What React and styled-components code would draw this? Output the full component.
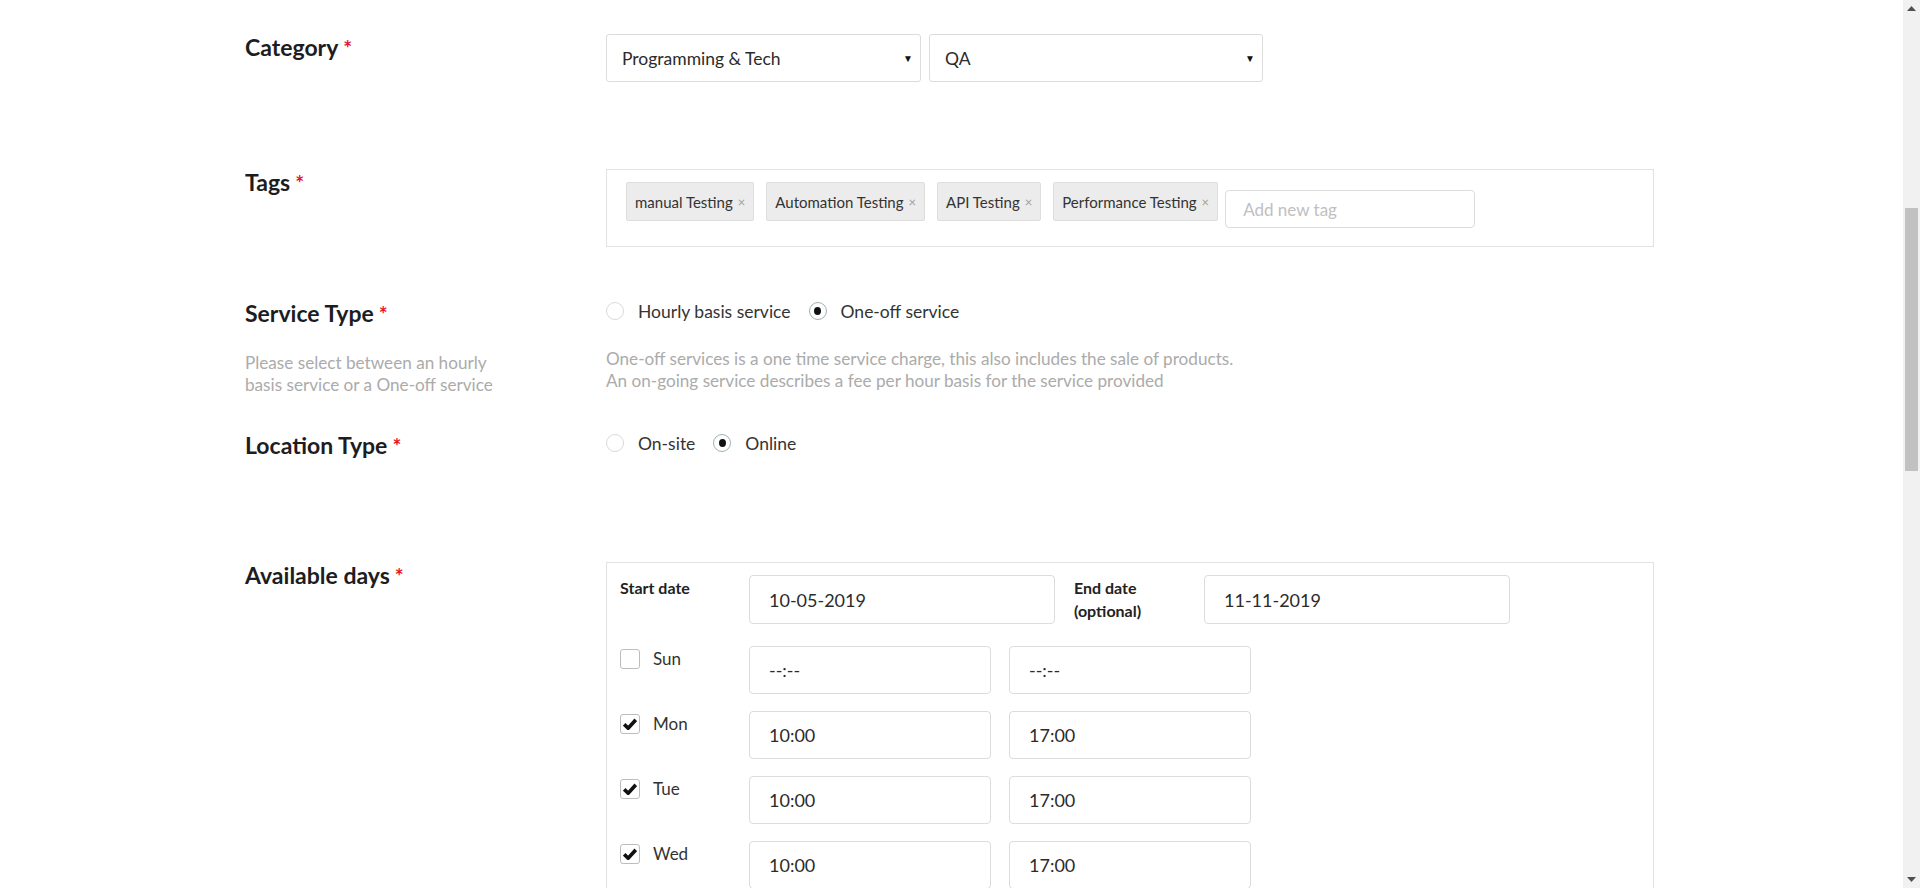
import React from 'react';
import styled, { createGlobalStyle } from 'styled-components';

const GlobalStyle = createGlobalStyle`
  html, body { margin: 0; padding: 0; background: #fff; overflow: hidden; }
  body { font-family: Lato, "Open Sans", Arial, sans-serif; color: #333; }
  * { box-sizing: border-box; }
`;

const Page = styled.div`
  display: flex;
  width: 1920px;
  height: 888px;
  overflow: hidden;
`;

const Main = styled.main`
  flex: 1;
  padding: 34px 0 0 245px;
  overflow: hidden;
`;

const Form = styled.div`
  width: 1409px;
  display: flex;
  flex-direction: column;
`;

const Row = styled.div`
  display: grid;
  grid-template-columns: 361px 1048px;
  align-items: start;
  margin-top: ${(p) => p.$mt || 0}px;
`;

const LabelCol = styled.div`
  display: flex;
  flex-direction: column;
`;

const Label = styled.div`
  font-size: 23px;
  font-weight: 700;
  color: #1d1d1f;
  line-height: 26px;
`;

const Req = styled.span`
  color: #e5132c;
  margin-left: 5px;
  font-size: 21px;
`;

const Help = styled.div`
  font-size: 17.15px;
  line-height: 22px;
  color: #ababab;
  margin-top: ${(p) => p.$mt || 0}px;
`;

const Field = styled.div`
  display: flex;
  flex-direction: column;
`;

const SelectRow = styled.div`
  display: flex;
  gap: 8px;
`;

const Select = styled.div`
  width: ${(p) => p.$w}px;
  height: 48px;
  border: 1px solid #dcdcdc;
  border-radius: 3px;
  padding: 0 7px 0 15px;
  display: flex;
  align-items: center;
  justify-content: space-between;
  font-size: 17.5px;
  color: #2b2b2b;
`;

const Caret = styled.span`
  font-size: 10px;
  color: #111;
`;

const TagBox = styled.div`
  height: 78px;
  border: 1px solid #e2e2e2;
  padding: 12px 19px;
  display: flex;
  align-items: flex-start;
`;

const Chips = styled.div`
  display: flex;
  gap: 12px;
`;

const Chip = styled.span`
  height: 39px;
  display: inline-flex;
  align-items: center;
  padding: 0 8px;
  background: #ececec;
  border: 1px solid #dedede;
  border-radius: 2px;
  font-size: 15px;
  color: #333;
`;

const ChipX = styled.span`
  color: #a0a0a0;
  font-size: 13px;
  margin-left: 5px;
`;

const TagInput = styled.div`
  width: 250px;
  height: 38px;
  margin: 8px 0 0 7px;
  border: 1px solid #dcdcdc;
  border-radius: 4px;
  padding-left: 17px;
  display: flex;
  align-items: center;
  font-size: 17px;
  color: #c0c0c0;
`;

const RadioGroup = styled.div`
  display: flex;
  align-items: center;
  height: 22px;
`;

const RadioOption = styled.label`
  display: flex;
  align-items: center;
  margin-right: 18px;
  font-size: 17.5px;
  color: #333;
`;

const RadioCircle = styled.span`
  width: 18px;
  height: 18px;
  border-radius: 50%;
  border: 1px solid ${(p) => (p.$on ? '#9fb0b5' : '#dadada')};
  display: inline-flex;
  align-items: center;
  justify-content: center;
  margin-right: 14px;
  &::after {
    content: '';
    width: 7px;
    height: 8px;
    border-radius: 50%;
    background: ${(p) => (p.$on ? '#111' : 'transparent')};
  }
`;

const DaysBox = styled.div`
  height: 340px;
  border: 1px solid #e2e2e2;
  border-bottom: none;
  padding: 12px 13px;
  display: flex;
  flex-direction: column;
`;

const DateRow = styled.div`
  display: flex;
  align-items: flex-start;
`;

const DateLabel = styled.div`
  width: ${(p) => p.$w}px;
  margin-left: ${(p) => p.$ml || 0}px;
  font-size: 16px;
  font-weight: 700;
  line-height: 23px;
  color: #222;
  padding-top: 1px;
`;

const Input = styled.div`
  width: ${(p) => p.$w}px;
  height: ${(p) => p.$h || 48}px;
  margin-left: ${(p) => p.$ml || 0}px;
  border: 1px solid #dcdcdc;
  border-radius: 4px;
  padding-left: 19px;
  display: flex;
  align-items: center;
  font-size: 18px;
  color: #2b2b2b;
`;

const DayList = styled.div`
  display: flex;
  flex-direction: column;
  gap: 17px;
  margin-top: 22px;
`;

const DayRow = styled.div`
  display: flex;
  align-items: flex-start;
`;

const DayCheck = styled.label`
  width: 129px;
  display: flex;
  align-items: center;
  padding-top: 2px;
  font-size: 17px;
  color: #333;
`;

const Box = styled.span`
  width: 20px;
  height: 20px;
  border: 1px solid #bdbdbd;
  border-radius: 3px;
  display: inline-flex;
  align-items: center;
  justify-content: center;
  margin-right: 13px;
  background: #fff;
`;

const Scrollbar = styled.div`
  width: 17px;
  height: 888px;
  background: #f1f1f1;
  display: flex;
  flex-direction: column;
`;

const ScrollBtn = styled.div`
  height: 17px;
  display: flex;
  align-items: center;
  justify-content: center;
`;

const Thumb = styled.div`
  height: 263px;
  margin: 191px 2px 0 2px;
  background: #c1c1c1;
`;

const Spacer = styled.div`
  flex: 1;
`;

const Check = () => (
  <svg width="14" height="12" viewBox="0 0 14 12">
    <path d="M1.2 6.3 L5.2 10.2 L12.8 1.8" fill="none" stroke="#111" strokeWidth="3.6" strokeLinejoin="miter" />
  </svg>
);

const Radio = ({ on, children }) => (
  <RadioOption>
    <RadioCircle $on={on} />
    {children}
  </RadioOption>
);

const days = [
  { d: 'Sun', on: false, a: '--:--', b: '--:--' },
  { d: 'Mon', on: true, a: '10:00', b: '17:00' },
  { d: 'Tue', on: true, a: '10:00', b: '17:00' },
  { d: 'Wed', on: true, a: '10:00', b: '17:00' },
];

const tags = ['manual Testing', 'Automation Testing', 'API Testing', 'Performance Testing'];

export default function App() {
  return (
    <>
      <GlobalStyle />
      <Page>
        <Main>
          <Form>
            <Row>
              <Label>
                Category<Req>*</Req>
              </Label>
              <SelectRow>
                <Select $w={315}>
                  Programming &amp; Tech<Caret>▼</Caret>
                </Select>
                <Select $w={334}>
                  QA<Caret>▼</Caret>
                </Select>
              </SelectRow>
            </Row>

            <Row $mt={87}>
              <Label>
                Tags<Req>*</Req>
              </Label>
              <TagBox>
                <Chips>
                  {tags.map((t) => (
                    <Chip key={t}>
                      {t}
                      <ChipX>×</ChipX>
                    </Chip>
                  ))}
                </Chips>
                <TagInput>Add new tag</TagInput>
              </TagBox>
            </Row>

            <Row $mt={53}>
              <LabelCol>
                <Label>
                  Service Type<Req>*</Req>
                </Label>
                <Help $mt={25}>
                  Please select between an hourly
                  <br />
                  basis service or a One-off service
                </Help>
              </LabelCol>
              <Field>
                <RadioGroup>
                  <Radio>Hourly basis service</Radio>
                  <Radio on>One-off service</Radio>
                </RadioGroup>
                <Help $mt={26}>
                  One-off services is a one time service charge, this also includes the sale of products.
                  <br />
                  An on-going service describes a fee per hour basis for the service provided
                </Help>
              </Field>
            </Row>

            <Row $mt={36}>
              <Label>
                Location Type<Req>*</Req>
              </Label>
              <RadioGroup>
                <Radio>On-site</Radio>
                <Radio on>Online</Radio>
              </RadioGroup>
            </Row>

            <Row $mt={103}>
              <Label>
                Available days<Req>*</Req>
              </Label>
              <DaysBox>
                <DateRow>
                  <DateLabel $w={129}>Start date</DateLabel>
                  <Input $w={306} $h={49}>10-05-2019</Input>
                  <DateLabel $w={130} $ml={19}>
                    End date
                    <br />
                    (optional)
                  </DateLabel>
                  <Input $w={306} $h={49}>11-11-2019</Input>
                </DateRow>
                <DayList>
                  {days.map((r) => (
                    <DayRow key={r.d}>
                      <DayCheck>
                        <Box>{r.on && <Check />}</Box>
                        {r.d}
                      </DayCheck>
                      <Input $w={242}>{r.a}</Input>
                      <Input $w={242} $ml={18}>{r.b}</Input>
                    </DayRow>
                  ))}
                </DayList>
              </DaysBox>
            </Row>
          </Form>
        </Main>
        <Scrollbar>
          <ScrollBtn>
            <svg width="9" height="5" viewBox="0 0 9 5"><polygon points="0,5 4.5,0 9,5" fill="#505050" /></svg>
          </ScrollBtn>
          <Thumb />
          <Spacer />
          <ScrollBtn>
            <svg width="9" height="5" viewBox="0 0 9 5"><polygon points="0,0 4.5,5 9,0" fill="#505050" /></svg>
          </ScrollBtn>
        </Scrollbar>
      </Page>
    </>
  );
}
